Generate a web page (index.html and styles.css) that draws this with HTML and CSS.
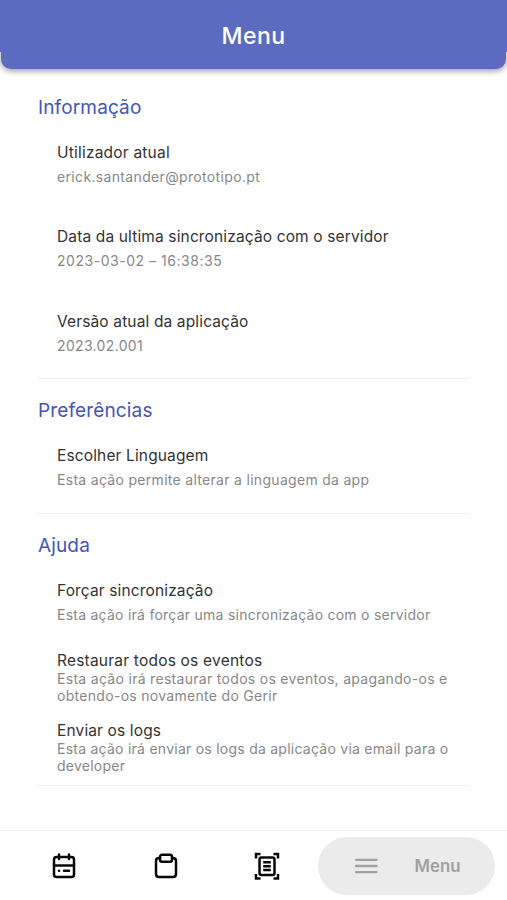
FILE: index.html
```html
<!DOCTYPE html>
<html lang="pt">
<head>
<meta charset="utf-8">
<title>Menu</title>
<link rel="stylesheet" href="styles.css">
</head>
<body>
<header class="bar"><h1>Menu</h1></header>
<main>
<section class="info">
<h2>Informação</h2>
<div class="item"><h3 class="user">Utilizador atual</h3><p class="email">erick.santander@prototipo.pt</p></div>
<div class="item"><h3>Data da ultima sincronização com o servidor</h3><p class="date">2023-03-02 – 16:38:35</p></div>
<div class="item"><h3>Versão atual da aplicação</h3><p class="version">2023.02.001</p></div>
</section>
<section class="prefs">
<h2>Preferências</h2>
<div class="item"><h3>Escolher Linguagem</h3><p>Esta ação permite alterar a linguagem da app</p></div>
</section>
<section class="help">
<h2>Ajuda</h2>
<div class="item"><h3>Forçar sincronização</h3><p class="tight">Esta ação irá forçar uma sincronização com o servidor</p></div>
<div class="item long"><h3 class="user">Restaurar todos os eventos</h3><p>Esta ação irá restaurar todos os eventos, apagando-os e<br>obtendo-os novamente do Gerir</p></div>
<div class="item long"><h3>Enviar os logs</h3><p class="tight">Esta ação irá enviar os logs da aplicação via email para o<br>developer</p></div>
</section>
</main>
<nav>
<a class="tab"><svg width="26" height="28" viewBox="0 0 26 28"><rect x="3" y="5" width="20" height="20" rx="2.5"/><path d="M3 13.5H23M8 2.5V7M18 2.5V7M8 18.7H8.1M13 18.7H18"/></svg></a>
<a class="tab"><svg width="26" height="28" viewBox="0 0 26 28"><path d="M7 6H6Q3 6 3 9V22Q3 25 6 25H20Q23 25 23 22V9Q23 6 20 6H19"/><rect x="7" y="2.8" width="12" height="7" rx="2"/></svg></a>
<a class="tab"><svg class="scan" width="26" height="28" viewBox="0 0 26 28"><rect x="5.5" y="5.5" width="15" height="17.5" rx="2"/><path d="M2 6.5V2H6.5M19.5 2H24V6.5M2 22V26.5H6.5M19.5 26.5H24V22M9.2 10.3H16.8M9.2 14.2H16.8M9.2 18.1H16.8"/></svg></a>
<a class="active"><svg width="24" height="20" viewBox="0 0 24 20"><path d="M2 3.8H22.5M2 10H22.5M2 16.2H22.5"/></svg><span>Menu</span></a>
</nav>
</body>
</html>
```

FILE: styles.css
```css
*{box-sizing:border-box}
body{margin:0;height:900px;display:flex;flex-direction:column;background:#fff;font-family:Inter,"Liberation Sans",sans-serif;overflow:hidden}
h1,h2,h3,p{margin:0;font-weight:400;white-space:nowrap}
.bar{height:69px;margin:0 1px;background:#5c6bc0;box-shadow:0 2px 6px #0006;border-radius:0 0 10px 10px;text-align:center}
.bar::before,.bar::after{content:"";position:absolute;top:0;width:1px;height:52px;background:#5c6bc0}
.bar::before{left:0}
.bar::after{right:0}
h1{color:#fff;font-size:23px;font-weight:500;line-height:72px;letter-spacing:.4px}
main{flex:1;padding:0 38px}
section{border-bottom:1px solid #efefef}
.info{height:310px;padding-top:25px}
.prefs{height:134.5px;padding-top:18px}
.help{height:272.5px;padding-top:18px}
h2{color:#4454b8;font-size:19px;line-height:27px;height:26px;letter-spacing:.14px}
.item{padding-left:19px;height:84.4px;padding-top:22px}
h3{font-size:15.5px;line-height:22px;color:#333;letter-spacing:.14px}
.user{letter-spacing:.21px}
p{font-size:14px;line-height:17px;color:#888;letter-spacing:.3px;margin-top:4px}
.tight{letter-spacing:.25px}
.email{letter-spacing:.34px}
.date{letter-spacing:.53px}
.version{letter-spacing:.34px}
.help .item{height:70px}
.help .long p{margin-top:-2px;line-height:17.5px}
nav{height:70px;border-top:1px solid #f2f2f2;display:flex;align-items:center;padding-left:13px}
.tab{width:101.7px;display:grid;place-items:center}
svg{fill:none;stroke:#080808;stroke-width:2.5;stroke-linecap:round;stroke-linejoin:round}
.scan{stroke-linecap:butt;stroke-linejoin:miter}
.active{width:177px;height:58px;border-radius:29px;background:#ebebeb;display:flex;align-items:center;padding-left:36px;gap:36.5px;color:#a0a0a0;font-weight:600;font-size:16.8px}
.active svg{stroke:#a0a0a0;stroke-width:2.3}
```
